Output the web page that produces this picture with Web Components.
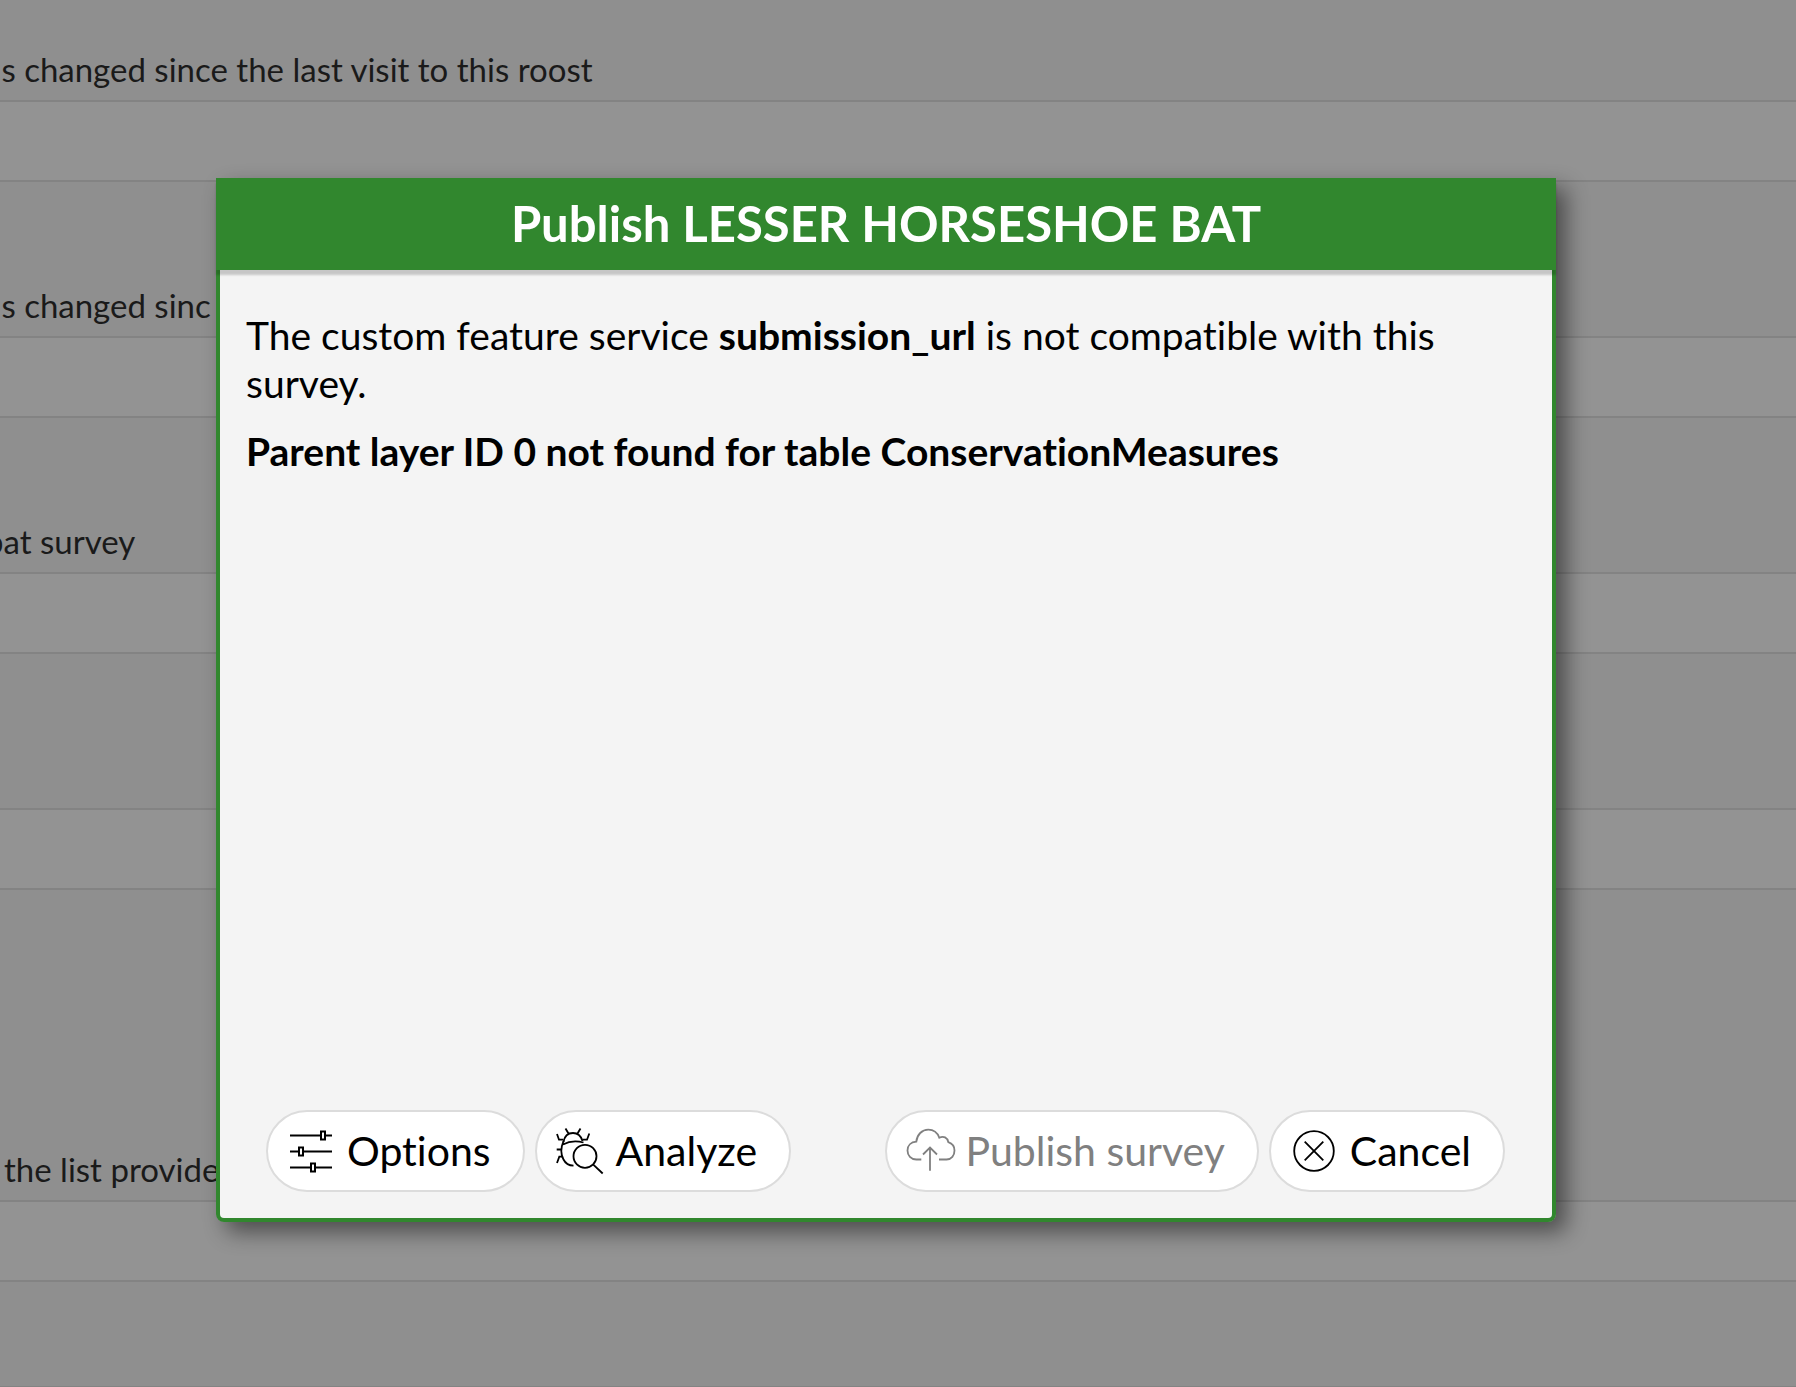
<!DOCTYPE html>
<html lang="en">
<head>
    <meta charset="utf-8">
    <title>Publish survey</title>
    <style>
        body {
            margin : 0;
            min-height : 100vh;
            background : #8f8f8f;
            color : #000000;
            font-family : Lato, "Open Sans", sans-serif;
            font-variant-ligatures : none;
        }
    </style>
</head>
<template id="survey-sheet">
    <style>
        :host {
            display : block;
            height : 100vh;
            overflow : hidden;
        }
        /* the sheet is scrolled down a little */
        .rows {
            margin-top : -54px;
        }
    </style>
    <div class="rows"><slot></slot></div>
</template>
<template id="survey-row">
    <style>
        :host {
            display : block;
            color : #1a1a1a;
            font-size : 33px;
            line-height : 40px;
            white-space : nowrap;
        }
        .label {
            display : flex;
            align-items : flex-end;
            box-sizing : border-box;
            height : 156px;
            padding : 0 0 11px 4px;
            border-bottom : 2px solid #838383;
        }
        /* the first letter is cut by the edge of the sheet */
        :host([clipped]) .text {
            margin-left : -19px;
        }
        :host([size="tall"]) .label {
            height : 312px;
        }
        :host([size="short"]) .label {
            height : 106px;
        }
        .answer {
            height : 78px;
            background : #939393;
            border-bottom : 2px solid #838383;
        }
    </style>
    <div class="label"><span class="text"><slot></slot></span></div>
    <div class="answer"></div>
</template>
<template id="publish-dialog">
    <style>
        :host {
            position : absolute;
            inset : 0;
            box-sizing : border-box;
            display : flex;
            padding : 178px 240px 165px 216px;
        }
        .dialog {
            flex : 1;
            display : flex;
            flex-direction : column;
            border-radius : 0 0 8px 8px;
            box-shadow : 10px 10px 22px rgba(0, 0, 0, .48);
        }
        header {
            position : relative;
            padding : 15px 20px 17px;
            background : #31872e;
            color : #ffffff;
            text-align : center;
            box-shadow : 0 5px 2px rgba(0, 0, 0, .19);
        }
        h1 {
            margin : 0;
            font-size : 49px;
            line-height : 60px;
            font-weight : 700;
        }
        .content {
            flex : 1;
            display : flex;
            flex-direction : column;
            justify-content : space-between;
            background : #f4f4f4;
            border : 4px solid #31872e;
            border-top : 0;
            border-radius : 0 0 8px 8px;
        }
        .message {
            padding : 41px 26px;
            font-size : 39px;
            line-height : 48px;
        }
        .actions {
            display : flex;
            justify-content : space-between;
            padding : 0 47px 26px 46px;
        }
        .group {
            display : flex;
            gap : 10px;
        }
    </style>
    <section class="dialog" role="dialog" aria-labelledby="title">
        <header><h1 id="title"><slot name="title"></slot></h1></header>
        <div class="content">
            <div class="message"><slot></slot></div>
            <div class="actions">
                <div class="group"><slot name="left"></slot></div>
                <div class="group"><slot name="right"></slot></div>
            </div>
        </div>
    </section>
</template>
<template id="pill-button">
    <style>
        :host {
            display : block;
        }
        button {
            display : flex;
            align-items : center;
            gap : 12px;
            height : 82px;
            padding : 0 32px 0 19px;
            border : 2px solid #dcdcdc;
            border-radius : 41px;
            background : #ffffff;
            color : #000000;
            font : inherit;
            font-size : 41px;
            line-height : 48px;
            white-space : nowrap;
        }
        button:disabled {
            color : #808080;
        }
        svg {
            display : block;
            overflow : visible;
            fill : none;
            stroke : currentColor;
            stroke-width : 1.8;
        }
    </style>
    <button type="button">
        <svg width="48" height="48" viewBox="0 0 48 48" aria-hidden="true"></svg>
        <span><slot></slot></span>
    </button>
</template>
<body>
    <survey-sheet>
        <survey-row clipped>as changed since the last visit to this roost</survey-row>
        <survey-row clipped>as changed sinc</survey-row>
        <survey-row clipped>bat survey</survey-row>
        <survey-row></survey-row>
        <survey-row size="tall">the list provide</survey-row>
        <survey-row size="short"></survey-row>
    </survey-sheet>
    <publish-dialog>
        <span slot="title">Publish LESSER HORSESHOE BAT</span>
        <message-text>The custom feature service <b>submission_url</b> is not compatible with this survey.</message-text>
        <message-text><b>Parent layer ID 0 not found for table ConservationMeasures</b></message-text>
        <pill-button slot="left" icon="options">Options</pill-button>
        <pill-button slot="left" icon="analyze">Analyze</pill-button>
        <pill-button slot="right" icon="publish" disabled>Publish survey</pill-button>
        <pill-button slot="right" icon="cancel">Cancel</pill-button>
    </publish-dialog>
    <script>
        const icons = {
            options : `<path stroke-width="2" d="M3 8.500H33M39 8.500H45M3 24.500H11M17 24.500H45M3 40.500H23M29 40.500H45"/>
                <path stroke-width="2" d="M34 4.500h4v8h-4zM12 20.500h4v8h-4zM24 36.500h4v8h-4z"/>`,
            analyze : `<path d="M9.500 1.500L12.500 6.500M24.500 1.500L21.500 6.500M7.500 15C8.500 9 12 6 17 6S25 9 26.500 14"/>
                <path d="M1 7L3 12.700H7.500M33.300 6.500L31 12.700H26.500M.700 22.500H5.500M1 36L3.300 29.700H6.300"/>
                <path d="M7 17.500C13 14.200 20 13.500 27.500 15.500M7.500 14C5 20 4.500 27 7.500 32.500C9.500 36.500 13 38.500 17.500 38.700"/>
                <circle cx="29" cy="29.300" r="11.500"/><path d="M37.300 37.600L46.700 46.500"/>`,
            publish : `<path d="M15.300 32.500H10.300C5 32.500 1.500 28.500 1.500 23.500C1.500 18.500 5 15 10.300 14.700C11 7.500 16 2.700 22.300 2.700C27.500 2.700 31.500 6 33.300 10.700C37.500 8.500 41.500 10.500 42.300 15.200C46 16.500 48.500 19.500 48.500 23.500C48.500 28.500 45.500 32.500 40.500 32.500H33"/>
                <path d="M24 43.700V20.500M17 27.500L24 20.500L31 27.500"/>`,
            cancel : `<circle cx="24" cy="24" r="19.800"/><path d="M14.700 14.700L33.300 33.300M33.300 14.700L14.700 33.300"/>`
        };

        class TemplateElement extends HTMLElement {
            constructor() {
                super();
                const template = document.querySelector(`#${this.localName}`).content;
                this.shadow = this.attachShadow({mode : 'open'});
                this.shadow.appendChild(template.cloneNode(true));
            }
        }

        class SurveySheet extends TemplateElement {}
        class SurveyRow extends TemplateElement {}
        class PublishDialog extends TemplateElement {}

        class MessageText extends HTMLElement {
            constructor() {
                super();
                this.shadow = this.attachShadow({mode : 'open'});
                this.shadow.innerHTML = `
                    <style>
                        :host { display : block; margin-bottom : 20px; }
                        p { margin : 0; }
                        ::slotted(b) { font-weight : 700; }
                    </style>
                    <p><slot></slot></p>`;
            }
        }

        class PillButton extends TemplateElement {
            connectedCallback() {
                this.shadow.querySelector('svg').innerHTML = icons[this.getAttribute('icon')];
                this.shadow.querySelector('button').disabled = this.hasAttribute('disabled');
            }
        }

        customElements.define('survey-sheet', SurveySheet);
        customElements.define('survey-row', SurveyRow);
        customElements.define('message-text', MessageText);
        customElements.define('pill-button', PillButton);
        customElements.define('publish-dialog', PublishDialog);
    </script>
</body>
</html>
